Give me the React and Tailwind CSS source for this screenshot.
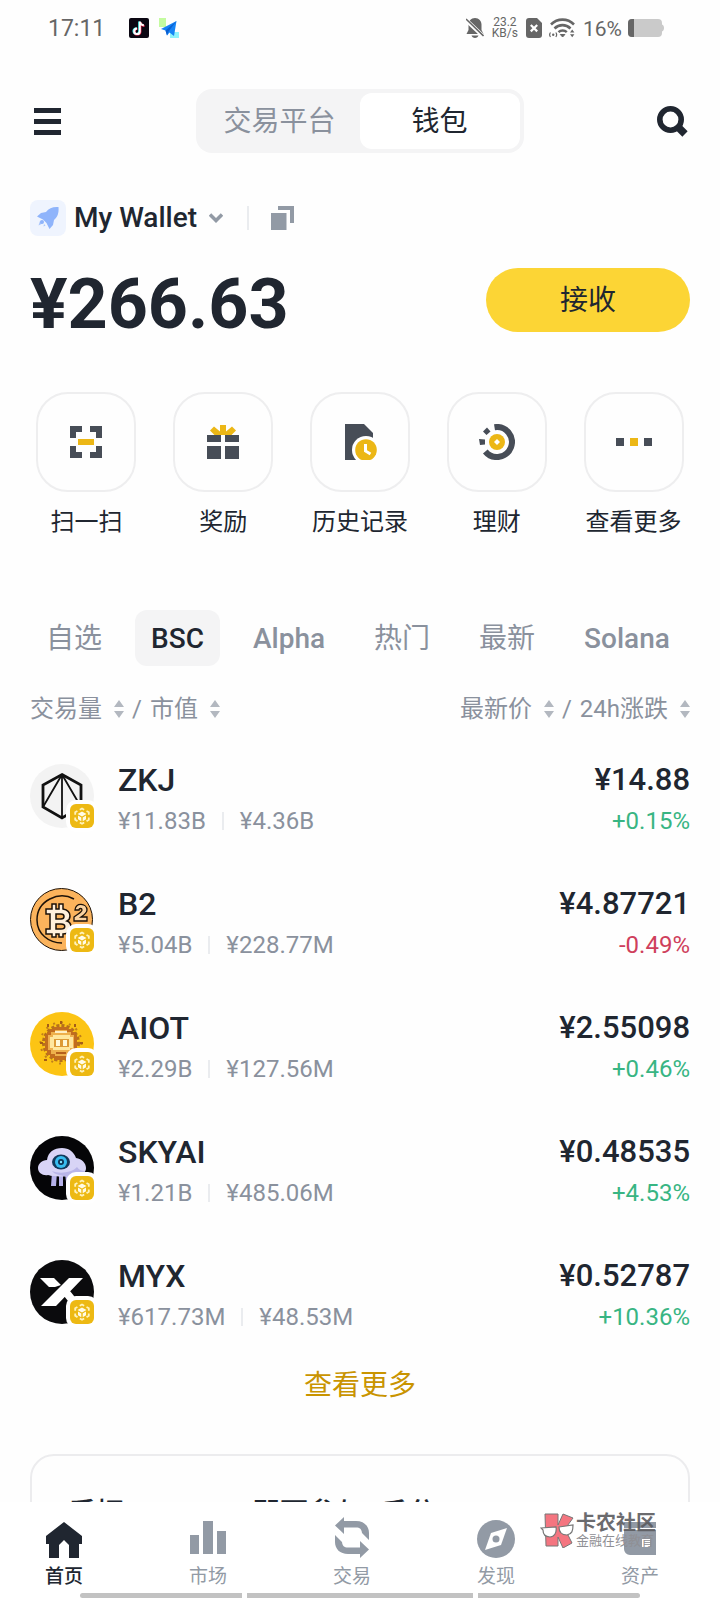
import React, { useState } from "react";

const cls = (...names) => names.filter(Boolean).join(" ");

/* ---------- status bar ---------- */

function StatusBar() {
  return (
    <div className="flex h-14 items-center justify-between pr-14 pl-12 text-[#666666]">
      <div className="flex items-center">
        <span className="pt-[2px] text-[23px] leading-8">17:11</span>
        <svg className="ml-6 size-5" viewBox="0 0 20 20">
          <rect width="20" height="20" rx="2" fill="#0b0712" />
          <path d="M10.2 3.4v9.8a2.9 2.9 0 1 1-2.7-3" fill="none" stroke="#25f4ee" strokeWidth="2" />
          <path d="M11.4 4v9.8a2.9 2.9 0 1 1-2.9-3M11.2 4.2c.5 2.3 2 3.5 4.3 3.7" fill="none" stroke="#fe2c55" strokeWidth="2" />
          <path d="M10.8 3.6v9.8a2.8 2.8 0 1 1-2.8-2.9M10.8 3.6c.4 2.2 1.800 3.400 4 3.600" fill="none" stroke="#fff" strokeWidth="2" />
        </svg>
        <svg className="ml-[10px] size-5" viewBox="0 0 20 20">
          <path d="M0 0h7v9H0z" fill="#c4fba0" />
          <path d="M11 14h9v6h-9z" fill="#8ff3fb" />
          <path d="M2 11 17.500 3 15 18l-4.500-3.500L8 17.500l-1.500-5z" fill="#1583f5" />
          <path d="m6.500 12.500 11-9.500-8 10.500L8 17.500z" fill="#0b5fd0" />
        </svg>
      </div>
      <div className="flex items-center">
        <svg className="h-5 w-[18px]" viewBox="0 0 18 20" fill="currentColor">
          <path d="M9 0c4 0 6.500 3 6.500 6.500V12l2 4h-17l2-4V6.500C2.500 3 5 0 9 0zM5.500 17.500h7C12 19 10.800 20 9 20s-3-1-3.500-2.500z" />
          <path d="m-1 1 19 18" stroke="#fff" strokeWidth="4" />
          <path d="m0 1 17.500 17" stroke="currentColor" strokeWidth="1.600" />
        </svg>
        <span className="ml-2 text-center text-[12px] leading-[11px]">
          23.2
          <br />
          KB/s
        </span>
        <svg className="ml-2 h-5 w-4" viewBox="0 0 16 20">
          <path d="M3 0h8l5 5v12a3 3 0 0 1-3 3H3a3 3 0 0 1-3-3V3a3 3 0 0 1 3-3z" fill="currentColor" />
          <path d="m4.800 7 6.400 6.400m0-6.400-6.400 6.400" stroke="#fff" strokeWidth="2.200" />
        </svg>
        <svg className="ml-[7px] h-5 w-[26px]" viewBox="0 0 26 20" fill="none" stroke="currentColor">
          <path d="M2 6.500c6.500-6.500 16.500-6.500 23 0M5.500 10.500c4.500-4.500 11.500-4.500 16 0" strokeWidth="2.600" />
          <path d="M9.500 14.200c2.300-2.300 6-2.300 8.300 0" strokeWidth="2.400" />
          <path d="m11.300 16.500 2.300 2.500 2.300-2.500z" fill="currentColor" strokeWidth="1" />
          <path d="M1.500 14.500c-1 1.300-1 3.200 0 4.500M6.800 14.500c1 1.300 1 3.200 0 4.500" strokeWidth="1.200" />
          <circle cx="4.200" cy="16.800" r="1.200" fill="currentColor" stroke="none" />
          <path d="m21 14.500 2.200-3 2.200 3zM21 16.200l2.200 3 2.200-3z" fill="currentColor" stroke="none" />
        </svg>
        <span className="ml-2 pt-[2px] text-[21px] leading-8">16%</span>
        <svg className="ml-[6px] h-[18px] w-9" viewBox="0 0 36 18">
          <path d="M4 0h26a4 4 0 0 1 4 4v1.500c1.300.5 2 1.500 2 3.500s-.7 3-2 3.500V14a4 4 0 0 1-4 4H4a4 4 0 0 1-4-4V4a4 4 0 0 1 4-4z" fill="#cacaca" />
          <path d="M6 0H4a4 4 0 0 0-4 4v10a4 4 0 0 0 4 4h2z" fill="#666" />
        </svg>
      </div>
    </div>
  );
}

/* ---------- quick actions ---------- */

function ScanIcon() {
  return (
    <svg className="size-9" viewBox="0 0 36 36">
      <path d="M2 2h12v6H8v6H2zM22 2h12v12h-6V8h-6zM2 22h6v6h6v6H2zM28 22h6v12H22v-6h6z" fill="#474d57" />
      <path d="M10 15h16v6H10z" fill="#ecb716" />
    </svg>
  );
}

function GiftIcon() {
  return (
    <svg className="size-9" viewBox="0 0 36 36">
      <path d="M2 11h14v7H2zM20 11h14v7H20zM2 22h14v13H2zM20 22h14v13H20z" fill="#474d57" />
      <path d="M15 1h6v10h-6z" fill="#ecb716" />
      <path d="m5 6.500 4-4 6 5V11H9.500zM31 6.500l-4-4-6 5V11h5.500z" fill="#ecb716" />
    </svg>
  );
}

function HistoryIcon() {
  return (
    <svg className="size-9" viewBox="0 0 36 36">
      <path d="M3 0h19l9 9v27H3z" fill="#474d57" />
      <circle cx="24" cy="26" r="14" fill="#fff" />
      <circle cx="24" cy="26" r="10.800" fill="#ecb716" />
      <path d="M23.500 20v7l5 3" fill="none" stroke="#fff" strokeWidth="3" />
    </svg>
  );
}

function EarnIcon() {
  return (
    <svg className="size-9" viewBox="0 0 36 36">
      <path d="M15.500 3.200A15 15 0 1 1 6.300 27.500" fill="none" stroke="#474d57" strokeWidth="6" />
      <path d="m4 7.500 4-4 3.500 4-4 3.500zM0 15l6 .500v5L1 21z" fill="#474d57" />
      <circle cx="18" cy="18" r="8" fill="#ecb716" />
      <path d="m18 15 3 3-3 3-3-3z" fill="#fff" />
    </svg>
  );
}

function MoreIcon() {
  return (
    <svg className="size-9" viewBox="0 0 36 36">
      <path d="M0 14h8v8H0zM28 14h8v8h-8z" fill="#474d57" />
      <path d="M14 14h8v8h-8z" fill="#ecb716" />
    </svg>
  );
}

const actions = [
  { label: "扫一扫", icon: <ScanIcon /> },
  { label: "奖励", icon: <GiftIcon /> },
  { label: "历史记录", icon: <HistoryIcon /> },
  { label: "理财", icon: <EarnIcon /> },
  { label: "查看更多", icon: <MoreIcon /> },
];

/* ---------- tokens ---------- */

function ZkjLogo() {
  return (
    <svg className="size-16" viewBox="0 0 64 64">
      <circle cx="32" cy="32" r="32" fill="#f3f3f3" />
      <path d="M32 10.500 51 21v22L32 54 13 43V21z" fill="none" stroke="#111" strokeWidth="2.800" />
      <path d="M32 10.500V54M32 10.500 13 43M32 10.500 51 43" fill="none" stroke="#111" strokeWidth="1.800" />
    </svg>
  );
}

function B2Logo() {
  return (
    <svg className="size-16" viewBox="0 0 64 64" stroke="#1d1208">
      <circle cx="31.500" cy="31.500" r="31" fill="#fbb35c" />
      <path d="M44 11C29 3 7 12 7 32c0 14 12 23 25 23" fill="none" strokeWidth="1.500" />
      <path
        d="M16 21h6v-5h4v5h3v-5h4v5c5 1 7 3 7 7 0 3-1 4-3 5 3 1 4 3 4 6 0 5-3 7-8 7v3h-4v-3h-3v3h-4v-3h-6v-5h4V26h-4zM26 26v5h5c4 0 4-5 0-5zM26 36v5h5c5 0 5-5 0-5z"
        fill="#fff0dc"
        fillRule="evenodd"
        strokeWidth="1.500"
      />
      <path d="M45 22c0-8 12-7 12 0 0 3-3 5-6 7h6v4H44v-4c4-3 8-5 8-7 0-2-3-2-3 0z" fill="#fbd3a0" strokeWidth="1.300" />
    </svg>
  );
}

function AiotLogo() {
  return (
    <svg className="size-16" viewBox="0 0 64 64">
      <circle cx="32" cy="32" r="32" fill="#fcc414" />
      <circle cx="31" cy="31" r="20.500" fill="none" stroke="#c07f1c" strokeWidth="2" strokeDasharray="2 6" />
      <circle cx="31" cy="31" r="17" fill="none" stroke="#b5701c" strokeWidth="4" strokeDasharray="3 2" />
      <g shapeRendering="crispEdges">
        <path d="M30 9h2v3h-2zM10 30h3v2h-3zM50 30h3v2h-3zM17 12h2v3h-2zM44 12h2v3h-2zM14 47h3v2h-3z" fill="#a55e18" />
        <path d="M24 15h14v2h4v3h3v3h2v16h-2v4h-3v3h-4v2H24v-2h-4v-3h-3v-4h-2V23h2v-3h3v-3h4z" fill="#c26d1e" />
        <path d="M25 18h12v2h4v3h3v15h-3v4h-4v2H25v-2h-4v-4h-3V23h3v-3h4z" fill="#eeb04c" />
        <path d="M23 23h17v2h3v11h-3v2H23v-2h-3V25h3z" fill="#ffe79e" />
        <path d="M24 27h15v8H24z" fill="#dd9a36" />
        <path d="M26 28h4v6h-4zM33 28h4v6h-4z" fill="#fff8d8" />
        <path d="M25 19h12v2H25z" fill="#ffeec4" />
        <path d="M26 40h10v2H26z" fill="#b5601c" />
      </g>
    </svg>
  );
}

function SkyLogo() {
  return (
    <svg className="size-16" viewBox="0 0 64 64">
      <circle cx="32" cy="32" r="32" fill="#050507" />
      <path d="M22 36h5l-1 14h-5zM29 37h4v13h-4zM35 37h5l4 13h-5l-3-4z" fill="#b7b2ea" />
      <path d="M17 24c1-8 7-12 15-12 7 0 12 4 14 10 6 1 10 5 10 10 0 4-3 7-7 7-4 2-26 2-31 0-5 1-10-2-10-7 0-4 4-8 9-8z" fill="#d8d4f6" />
      <path d="M22 35c7 3 20 2 25-4 2 3 5 4 8 4-1 3-3 4-6 4-5 2-23 2-27-4z" fill="#b9b5e8" />
      <ellipse cx="31" cy="26" rx="9" ry="7.500" fill="#123a5c" />
      <circle cx="31" cy="26" r="6" fill="#37bdf0" />
      <circle cx="31" cy="26" r="3" fill="#0c3354" />
      <circle cx="31" cy="26" r="1.200" fill="#7fe3ff" />
    </svg>
  );
}

function MyxLogo() {
  return (
    <svg className="size-16" viewBox="0 0 64 64">
      <circle cx="32" cy="32" r="32" fill="#0b0b0d" />
      <path d="M10 18h14l7 7-6 2H19zM39 18h14L26 46H11zM34 36l6-5 12 15H42z" fill="#fff" />
    </svg>
  );
}

function ChainBadge() {
  return (
    <svg className="absolute -right-1 -bottom-1 size-8" viewBox="0 0 32 32">
      <rect width="32" height="32" rx="10" fill="#fff" />
      <rect x="4" y="4" width="24" height="24" rx="6" fill="#edb913" />
      <path d="m16 8.500 6.800 3.800v7.500L16 23.700l-6.800-3.900v-7.500z" fill="none" stroke="#fff3bd" strokeWidth="1.800" strokeDasharray="5 2.700" strokeDashoffset="2.500" />
      <path d="m16 11.500 4.500 2.500-4.500 2.600-4.500-2.600zM12 15.500l3.300 1.900v3.800L12 19.300zM20 15.500l-3.300 1.900v3.800l3.300-1.900z" fill="#fffbe8" />
    </svg>
  );
}

const tokens = [
  { name: "ZKJ", volume: "¥11.83B", cap: "¥4.36B", price: "¥14.88", change: "+0.15%", logo: <ZkjLogo /> },
  { name: "B2", volume: "¥5.04B", cap: "¥228.77M", price: "¥4.87721", change: "-0.49%", logo: <B2Logo /> },
  { name: "AIOT", volume: "¥2.29B", cap: "¥127.56M", price: "¥2.55098", change: "+0.46%", logo: <AiotLogo /> },
  { name: "SKYAI", volume: "¥1.21B", cap: "¥485.06M", price: "¥0.48535", change: "+4.53%", logo: <SkyLogo /> },
  { name: "MYX", volume: "¥617.73M", cap: "¥48.53M", price: "¥0.52787", change: "+10.36%", logo: <MyxLogo /> },
];

function TokenRow({ token }) {
  const down = token.change.startsWith("-");
  return (
    <li className="flex items-start">
      <div className="relative mt-[6px] shrink-0">
        {token.logo}
        <ChainBadge />
      </div>
      <div className="ml-6 flex-1">
        <div className="text-[32px] leading-[44px] font-medium text-[#202630]">{token.name}</div>
        <div className="flex items-center text-[24px] leading-[38px] text-[#8a919d]">
          <span>{token.volume}</span>
          <span className="mx-4 h-[18px] w-[2px] bg-[#eaecef]" />
          <span>{token.cap}</span>
        </div>
      </div>
      <div className="text-right">
        <div className="text-[31px] leading-[44px] font-medium text-[#202630]">{token.price}</div>
        <div className={cls("text-[24px] leading-[38px]", down ? "text-[#cf3f5c]" : "text-[#38b583]")}>{token.change}</div>
      </div>
    </li>
  );
}

const tabs = ["自选", "BSC", "Alpha", "热门", "最新", "Solana"];

function SortButton({ label }) {
  return (
    <button className="flex items-center gap-3">
      {label}
      <svg className="h-[18px] w-[10px]" viewBox="0 0 10 18" fill="#b3b8c0">
        <path d="m5 0 5 7H0zM0 11h10l-5 7z" />
      </svg>
    </button>
  );
}

/* ---------- bottom navigation ---------- */

const navItems = [
  {
    label: "首页",
    icon: (
      <svg className="h-[42px] w-10" viewBox="0 0 40 42" fill="currentColor">
        <path d="m20 6 18 14v8h-3v14H25V29l-5-5-5 5v13H5V28H2v-8z" />
      </svg>
    ),
  },
  {
    label: "市场",
    icon: (
      <svg className="h-[42px] w-10" viewBox="0 0 40 42" fill="currentColor">
        <path d="M2 19h9v19H2zM15 5h10v33H15zM29 15h9v23h-9z" />
      </svg>
    ),
  },
  {
    label: "交易",
    icon: (
      <svg className="h-[42px] w-10" viewBox="0 0 40 42" fill="currentColor">
        <path d="m3 19 7 7c.5 4 2 5.500 6 5.500h12V25l9 8.500-9 8.500v-4H16C8 38 3 33 3 26z" />
        <path d="m3 19 7 7c.5 4 2 5.500 6 5.500h12V25l9 8.500-9 8.500v-4H16C8 38 3 33 3 26z" transform="rotate(180 20 21.500)" />
      </svg>
    ),
  },
  {
    label: "发现",
    icon: (
      <svg className="h-[42px] w-10" viewBox="0 0 40 42">
        <circle cx="20" cy="23" r="19" fill="currentColor" />
        <path d="m31 12-6 17-16 5 6-17z" fill="#fff" />
        <circle cx="20" cy="23" r="3.500" fill="currentColor" />
      </svg>
    ),
  },
  {
    label: "资产",
    icon: (
      <svg className="h-[42px] w-10" viewBox="0 0 40 42">
        <path d="M4 6h32v6H4zM4 14h32v25H10a6 6 0 0 1-6-6z" fill="currentColor" />
        <path d="M22 23h8v8h-8z" fill="#fff" />
      </svg>
    ),
  },
];

function Watermark() {
  return (
    <div className="pointer-events-none absolute top-[10px] right-16 flex items-center gap-[2px] text-[#5b5b5f]">
      <svg className="h-9 w-[34px]" viewBox="0 0 34 36">
        <path d="M5 2h13v11l5-11 10 4-8 11 7 14-9 5-5-11v9H6z" fill="#f47580" stroke="#777" strokeWidth="1" />
        <path d="m1 16 15-1c1 6-2 10-6 10-5 0-7-3-7-7zM19 15l14-2c0 6-1 9-6 10-5 0-8-3-8-8z" fill="#fff" stroke="#777" strokeWidth="1.200" />
      </svg>
      <div>
        <div className="text-[20px] leading-[22px] font-bold opacity-90">卡农社区</div>
        <div className="text-[13px] leading-[14px] text-[#8f8f94]">金融在线教育</div>
      </div>
    </div>
  );
}

function BottomNav() {
  return (
    <nav className="relative shrink-0 bg-white pt-[14px] pb-[2px]">
      <div className="flex justify-between pr-15 pl-11">
        {navItems.map((item, i) => (
          <a
            key={item.label}
            href="#"
            className={cls(
              "flex w-10 flex-col items-center text-[19px] leading-6 whitespace-nowrap",
              i === 0 ? "font-medium text-[#202630]" : "text-[#929aa5]"
            )}
          >
            {item.icon}
            <span className="mt-[7px]">{item.label}</span>
          </a>
        ))}
      </div>
      <Watermark />
      {/* system gesture bar */}
      <div className="mt-1 flex gap-[5px] px-20">
        <span className="h-[5px] flex-[162] rounded-l-full bg-[#c2c2c2]" />
        <span className="h-[5px] flex-[226] bg-[#c2c2c2]" />
        <span className="h-[5px] flex-[162] rounded-r-full bg-[#c2c2c2]" />
      </div>
    </nav>
  );
}

export default function App() {
  const [mode, setMode] = useState("钱包");
  const [tab, setTab] = useState("BSC");

  return (
    <div className="flex h-screen flex-col bg-[#fefefe] font-[Roboto,'Noto_Sans_CJK_SC',sans-serif] text-[#202630]">
      <StatusBar />
      <main className="flex-1 overflow-y-auto [scrollbar-width:none]">
        <header className="mt-[33px] flex items-center justify-between px-8">
          <button aria-label="Menu" className="px-[2px]">
            <svg className="h-[27px] w-[27px]" viewBox="0 0 27 27" fill="#202630">
              <path d="M0 0h27v5H0zM0 11h27v5H0zM0 22h27v5H0z" />
            </svg>
          </button>
          <div className="flex h-16 w-[328px] rounded-2xl bg-[#f4f4f5] p-1 text-[28px]">
            {["交易平台", "钱包"].map((name) => (
              <button
                key={name}
                onClick={() => setMode(name)}
                className={cls("flex-1 rounded-xl pt-[2px]", mode === name ? "bg-white text-[#202630]" : "text-[#8a919d]")}
              >
                {name}
              </button>
            ))}
          </div>
          <button aria-label="Search">
            <svg className="size-8" viewBox="0 0 32 32" fill="none" stroke="#202630">
              <circle cx="14.500" cy="14.500" r="10.700" strokeWidth="5.600" />
              <path d="m23 23 6 6" strokeWidth="7.500" />
            </svg>
          </button>
        </header>

        <section className="mt-[47px] px-[30px]">
          <div className="flex items-center">
            <button className="flex items-center text-[28px] leading-9 font-medium">
              <svg className="mr-2 size-9" viewBox="0 0 36 36">
                <rect width="36" height="36" rx="8" fill="#eff4fe" />
                <path d="M28.500 7c.500 6-1 10-4.500 13l-1 5-3.500 4-3-6-3.500-3.500-6-3 4-3.500 5-1c3-4 7-5.500 12.500-5z" fill="#8fb4fb" />
                <path d="m10 21 2.500 2.500-4 2z M14 24l1.500 1.500-2 1z" fill="#a9c6fc" />
                <circle cx="12" cy="22" r="2" fill="#8fb4fb" />
              </svg>
              My Wallet
              <svg className="ml-3 h-[10px] w-[14px]" viewBox="0 0 14 10" fill="none" stroke="#929aa5" strokeWidth="3.500">
                <path d="m1 1.500 6 6 6-6" />
              </svg>
            </button>
            <span className="mr-[22px] ml-6 h-6 w-[2px] bg-[#eaecef]" />
            <button aria-label="Copy">
              <svg className="size-6" viewBox="0 0 24 24" fill="#929aa5">
                <path d="M0 7h15.500v17H0zM7 0h16v17h-4V4H7z" />
              </svg>
            </button>
          </div>

          <div className="mt-8 flex items-center justify-between">
            <div className="pt-2 text-[70px] leading-[56px] font-bold">¥266.63</div>
            <button className="h-16 w-[204px] rounded-full bg-[#fcd535] pt-[2px] text-[28px]">接收</button>
          </div>
        </section>

        <section className="mt-[60px] grid grid-cols-5 px-[18px]">
          {actions.map((a) => (
            <button key={a.label} className="flex flex-col items-center">
              <span className="flex size-[100px] items-center justify-center rounded-[32px] border-2 border-[#eeeeef]">
                {a.icon}
              </span>
              <span className="mt-[14px] text-[24px] leading-8">{a.label}</span>
            </button>
          ))}
        </section>

        <div className="mt-[72px] flex gap-[17px] overflow-hidden pl-[30px] text-[28px] whitespace-nowrap">
          {tabs.map((name) => (
            <button
              key={name}
              onClick={() => setTab(name)}
              className={cls(
                "h-14 shrink-0 rounded-xl px-4 pt-[2px]",
                /[a-z]/i.test(name) && "font-medium",
                tab === name ? "bg-[#f4f4f5] text-[#202630]" : "text-[#8a919d]"
              )}
            >
              {name}
            </button>
          ))}
        </div>

        <div className="mt-[27px] flex justify-between px-[30px] text-[24px] leading-8 text-[#8a919d]">
          <div className="flex gap-2">
            <SortButton label="交易量" />
            <span>/</span>
            <SortButton label="市值" />
          </div>
          <div className="flex gap-2">
            <SortButton label="最新价" />
            <span>/</span>
            <SortButton label="24h涨跌" />
          </div>
        </div>

        <ul className="mt-[33px] flex flex-col gap-[42px] px-[30px]">
          {tokens.map((t) => (
            <TokenRow key={t.name} token={t} />
          ))}
        </ul>

        <div className="mt-[30px] text-center">
          <a href="#" className="block text-[28px] leading-10 text-[#c99400]">
            查看更多
          </a>
        </div>

        <section className="mx-[30px] mt-12 rounded-3xl border-2 border-[#ececee] px-9 pt-[38px] pb-16 text-[28px] leading-10 font-medium">
          <div className="flex">
            <span className="mr-32">质押</span>
            <span className="mr-4">即可参与</span>
            <span>瓜分</span>
          </div>
        </section>
      </main>
      <BottomNav />
    </div>
  );
}
